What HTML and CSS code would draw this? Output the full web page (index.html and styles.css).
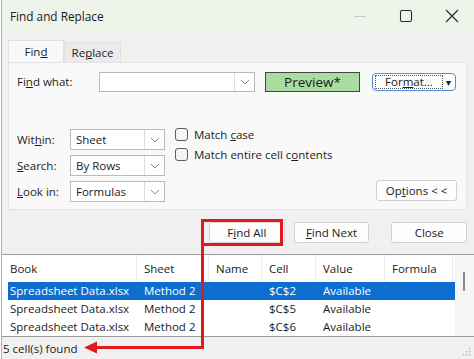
FILE: index.html
```html
<!DOCTYPE html>
<html lang="en">
<head>
    <meta charset="UTF-8">
    <title>Find and Replace</title>
    <link rel="stylesheet" href="styles.css">
</head>
<body>
    <div class="window">
        <div class="titlebar">
            <span class="title">Find and Replace</span>
            <div class="controls">
                <svg class="ctl" width="16" height="16" viewBox="0 0 16 16"><path d="M2 8.5h12" stroke="#c4c4c4" stroke-width="1"/></svg>
                <svg class="ctl" width="16" height="16" viewBox="0 0 16 16"><rect x="2.5" y="2.5" width="11" height="11" rx="1.5" fill="none" stroke="#2b2b2b" stroke-width="1.1"/></svg>
                <svg class="ctl" width="16" height="16" viewBox="0 0 16 16"><path d="M2 2l12 12M14 2L2 14" stroke="#2b2b2b" stroke-width="1.2"/></svg>
            </div>
        </div>

        <div class="content">
            <div class="tabs">
                <div class="tab active"><span>Fin<u>d</u></span></div>
                <div class="tab"><span>Re<u>p</u>lace</span></div>
            </div>

            <div class="panel">
                <div class="find-row">
                    <span class="lbl lbl-wide">Fi<u>n</u>d what:</span>
                    <div class="combo combo-find">
                        <span class="combo-text"></span>
                        <span class="combo-arrow"><svg width="10" height="6" viewBox="0 0 10 6"><path d="M1 1l4 4 4-4" fill="none" stroke="#8a8a8a" stroke-width="1"/></svg></span>
                    </div>
                    <button class="btn btn-preview">Preview*</button>
                    <button class="btn btn-format"><span class="format-inner">For<u>m</u>at...</span><span class="caret">&#9662;</span></button>
                </div>

                <div class="opts">
                    <div class="selects">
                        <div class="sel-row">
                            <span class="lbl">Wit<u>h</u>in:</span>
                            <div class="combo combo-sel">
                                <span class="combo-text">Sheet</span>
                                <span class="combo-arrow"><svg width="10" height="6" viewBox="0 0 10 6"><path d="M1 1l4 4 4-4" fill="none" stroke="#8a8a8a" stroke-width="1"/></svg></span>
                            </div>
                        </div>
                        <div class="sel-row">
                            <span class="lbl"><u>S</u>earch:</span>
                            <div class="combo combo-sel">
                                <span class="combo-text">By Rows</span>
                                <span class="combo-arrow"><svg width="10" height="6" viewBox="0 0 10 6"><path d="M1 1l4 4 4-4" fill="none" stroke="#8a8a8a" stroke-width="1"/></svg></span>
                            </div>
                        </div>
                        <div class="sel-row">
                            <span class="lbl"><u>L</u>ook in:</span>
                            <div class="combo combo-sel">
                                <span class="combo-text">Formulas</span>
                                <span class="combo-arrow"><svg width="10" height="6" viewBox="0 0 10 6"><path d="M1 1l4 4 4-4" fill="none" stroke="#8a8a8a" stroke-width="1"/></svg></span>
                            </div>
                        </div>
                    </div>

                    <div class="checks">
                        <label class="check"><span class="box"></span><span>Match <u>c</u>ase</span></label>
                        <label class="check"><span class="box"></span><span>Match entire cell c<u>o</u>ntents</span></label>
                    </div>

                    <button class="btn btn-options">Op<u>t</u>ions &lt; &lt;</button>
                </div>
            </div>

            <div class="actions">
                <button class="btn btn-act">F<u>i</u>nd All</button>
                <button class="btn btn-act btn-next"><u>F</u>ind Next</button>
                <button class="btn btn-act btn-close">Close</button>
            </div>
        </div>

        <div class="results">
            <div class="list">
                <div class="lrow head">
                    <span class="c1">Book</span>
                    <span class="c2">Sheet</span>
                    <span class="c3">Name</span>
                    <span class="c4">Cell</span>
                    <span class="c5">Value</span>
                    <span class="c6">Formula</span>
                </div>
                <div class="lrow item selected">
                    <span class="c1">Spreadsheet Data.xlsx</span>
                    <span class="c2">Method 2</span>
                    <span class="c3"></span>
                    <span class="c4">$C$2</span>
                    <span class="c5">Available</span>
                    <span class="c6"></span>
                </div>
                <div class="lrow item">
                    <span class="c1">Spreadsheet Data.xlsx</span>
                    <span class="c2">Method 2</span>
                    <span class="c3"></span>
                    <span class="c4">$C$5</span>
                    <span class="c5">Available</span>
                    <span class="c6"></span>
                </div>
                <div class="lrow item">
                    <span class="c1">Spreadsheet Data.xlsx</span>
                    <span class="c2">Method 2</span>
                    <span class="c3"></span>
                    <span class="c4">$C$6</span>
                    <span class="c5">Available</span>
                    <span class="c6"></span>
                </div>
            </div>
            <div class="scroll"><span class="thumb"></span></div>
        </div>

        <div class="status">
            <span>5 cell(s) found</span>
            <svg class="grip" width="8" height="8" viewBox="0 0 8 8"><g fill="#b0b0b0"><rect x="6" y="0" width="1.3" height="1.3"/><rect x="3" y="3" width="1.3" height="1.3"/><rect x="6" y="3" width="1.3" height="1.3"/><rect x="0" y="6" width="1.3" height="1.3"/><rect x="3" y="6" width="1.3" height="1.3"/><rect x="6" y="6" width="1.3" height="1.3"/></g></svg>
        </div>

        <!-- annotation drawn over the dialog -->
        <svg class="annot" width="474" height="359" viewBox="0 0 474 359">
            <rect x="202.5" y="220.5" width="79" height="24" fill="none" stroke="#e3191f" stroke-width="3"/>
            <path d="M202.5 246V347.5H94" fill="none" stroke="#e3191f" stroke-width="3"/>
            <path d="M84 347.5L97 341.5V353.5Z" fill="#e3191f"/>
        </svg>
    </div>
</body>
</html>
```

FILE: styles.css
```css
body {
    margin: 0;
    background: #ffffff;
    font-family: "Open Sans", "Noto Sans", sans-serif;
    font-size: 11.5px;
    color: #1b1b1b;
}

.window {
    position: relative; /* holds the annotation overlay */
    width: 472px;
    height: 359px;
    margin-left: 1px;
    border-left: 1px solid #b4b4b4;
    background: #f0f0f0;
    overflow: hidden;
}

.titlebar {
    height: 32px;
    display: flex;
    align-items: center;
    justify-content: space-between;
    padding: 0 14px 0 8px;
    background: #eef4ea;
}

.title {
    font-size: 11.8px;
    color: #1a1a1a;
}

.controls {
    display: flex;
    gap: 30px;
}

.ctl {
    display: block;
}

.content {
    padding: 8px 7px 0 6px;
}

.tabs {
    display: flex;
    align-items: flex-end;
    height: 22px;
}

.tab {
    height: 20px;
    width: 57px;
    box-sizing: border-box;
    display: flex;
    align-items: center;
    justify-content: center;
    background: #ebebeb;
    border: 1px solid #e0e0e0;
    border-bottom: none;
}

.tab.active {
    height: 22px;
    width: 56px;
    background: #f9f9f9;
    position: relative;
    z-index: 1;
}

.panel {
    height: 148px;
    box-sizing: border-box;
    background: #f9f9f9;
    border: 1px solid #e2e2e2;
    padding: 8px 9px 0 8px;
}

.find-row {
    display: flex;
    align-items: center;
    height: 21px;
}

.lbl {
    width: 53px;
    flex-shrink: 0;
}

.lbl-wide {
    width: 82px;
}

.combo {
    display: flex;
    box-sizing: border-box;
    background: #ffffff;
    border: 1px solid #b9b9b9;
    height: 21px;
}

.combo-find {
    width: 156px;
    height: 20px;
}

.combo-sel {
    width: 95px;
}

.combo-text {
    flex: 1;
    padding-left: 5px;
    line-height: 19px;
}

.combo-arrow {
    width: 19px;
    border-left: 1px solid #dcdcdc;
    display: flex;
    align-items: center;
    justify-content: center;
}

.btn {
    font-family: inherit;
    font-size: 11.5px;
    color: #1b1b1b;
    box-sizing: border-box;
    background: #fdfdfd;
    border: 1px solid #d0d0d0;
    border-radius: 3px;
    padding: 0;
    height: 21px;
}

.btn-preview {
    margin-left: 10px;
    width: 95px;
    height: 20px;
    font-size: 13.5px;
    background: #a9dca0;
    border: 1px solid #3d4a3b;
    border-radius: 0;
}

.btn-format {
    margin-left: 12px;
    width: 84px;
    height: 18px;
    display: flex;
    align-items: center;
    padding: 0 2px;
    border: 1.5px solid #4d8fd2;
    border-radius: 4px;
}

.format-inner {
    flex: 1;
    height: 12px;
    line-height: 12px;
    border: 1px dotted #555;
    text-align: center;
}

.caret {
    width: 10px;
    text-align: center;
    font-size: 10px;
}

.opts {
    display: flex;
    align-items: flex-start;
    margin-top: 35px;
}

.selects {
    display: flex;
    flex-direction: column;
    gap: 5px;
    padding-top: 2px;
}

.sel-row {
    display: flex;
    align-items: center;
}

.checks {
    display: flex;
    flex-direction: column;
    gap: 6px;
    margin-left: 10px;
}

.check {
    display: flex;
    align-items: center;
    height: 14px;
}

.box {
    width: 13px;
    height: 13px;
    box-sizing: border-box;
    border: 1px solid #5c5c5c;
    border-radius: 3px;
    background: #f4f4f4;
    margin-right: 6px;
}

.btn-options {
    margin-left: auto;
    margin-top: 53px;
    width: 81px;
    height: 21px;
}

.actions {
    display: flex;
    margin-top: 12px;
    padding-left: 201px;
}

.btn-act {
    width: 76px;
    height: 21px;
}

.btn-next {
    margin-left: 9px;
}

.btn-close {
    margin-left: 22px;
}

.results {
    margin-top: 11px;
    height: 83px;
    box-sizing: border-box;
    border-top: 1px solid #9a9a9a;
    border-bottom: 1px solid #9a9a9a;
    background: #ffffff;
    display: flex;
}

.list {
    width: 453px;
    padding-left: 6px;
    box-sizing: border-box;
}

.lrow {
    display: flex;
    white-space: nowrap;
}

.lrow span {
    box-sizing: border-box;
    overflow: hidden;
    padding-left: 7px;
}

.lrow .c1 { width: 129px; padding-left: 2px; }
.lrow .c2 { width: 72px; }
.lrow .c3 { width: 53px; }
.lrow .c4 { width: 54px; }
.lrow .c5 { width: 69px; }
.lrow .c6 { width: 68px; }

.head {
    height: 27px;
    align-items: center;
}

.head span {
    border-right: 1px solid #ececec;
    line-height: 27px;
}

.item {
    height: 18px;
    line-height: 18px;
}

.item.selected {
    background: #0c6fd0;
    color: #ffffff;
}

.scroll {
    flex: 1;
    background: #f6f6f6;
    position: relative;
}

.thumb {
    position: absolute;
    left: 8px;
    top: 17px;
    width: 2px;
    height: 19px;
    background: #8c8c8c;
}

.status {
    height: 22px;
    display: flex;
    align-items: center;
    justify-content: space-between;
    padding: 0 3px 0 1px;
}

.grip {
    align-self: flex-end;
    margin-bottom: 3px;
}

.annot {
    position: absolute;
    left: -2px;
    top: 0;
    pointer-events: none;
}
```
